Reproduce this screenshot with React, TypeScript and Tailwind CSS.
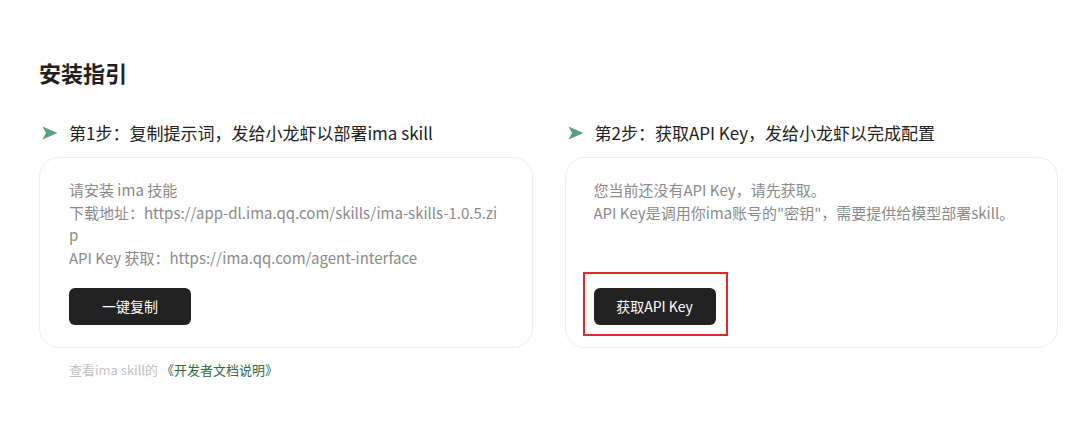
const font = { fontFamily: '"Noto Sans CJK SC", "Noto Sans", sans-serif' };

const ArrowIcon = () => (
  <svg width="16" height="14" viewBox="0 0 16 14" className="shrink-0">
    <path d="M0.5 0.5 L15.5 7 L0.5 13.5 L4 7 Z" fill="#5b9e7c" />
  </svg>
);

const StepTitle = ({ text }: { text: string }) => (
  <div className="flex items-center gap-[11px] pl-[3px] text-[17px] leading-[24px] text-[#222]">
    <ArrowIcon />
    <span>{text}</span>
  </div>
);

const DarkButton = ({ label }: { label: string }) => (
  <button className="h-[37px] w-[122px] rounded-[6px] bg-[#222222] text-[14px] text-white">{label}</button>
);

export default function App() {
  return (
    <div className="min-h-[427px] w-[1080px] bg-white pl-[39px] pr-[22px] pt-[57px]" style={font}>
      <h2 className="text-[22px] font-bold leading-[30px] text-[#1f1f1f]">安装指引</h2>

      <div className="mt-[34px] grid grid-cols-2 gap-x-[32px]">
        {/* Step 1 */}
        <div className="flex flex-col">
          <StepTitle text="第1步：复制提示词，发给小龙虾以部署ima skill" />
          <div className="mt-[12px] flex h-[191px] flex-col rounded-[20px] border border-[#efefef] bg-white px-[29px] pb-[22px] pt-[21px]">
            <div className="break-all text-[15px] leading-[22.7px] text-[#8a8a8a]">
              <p>请安装 ima 技能</p>
              <p>下载地址：https://app-dl.ima.qq.com/skills/ima-skills-1.0.5.zip</p>
              <p>API Key 获取：https://ima.qq.com/agent-interface</p>
            </div>
            <div className="mt-auto">
              <DarkButton label="一键复制" />
            </div>
          </div>
          <p className="mt-[12px] pl-[30px] text-[13px] leading-[20px] text-[#c2c2c2]">
            查看ima skill的 <span className="text-[#2f6b45]">《开发者文档说明》</span>
          </p>
        </div>

        {/* Step 2 */}
        <div className="flex flex-col">
          <StepTitle text="第2步：获取API Key，发给小龙虾以完成配置" />
          <div className="mt-[12px] flex h-[191px] flex-col rounded-[20px] border border-[#efefef] bg-white px-[28px] pb-[22px] pt-[21px]">
            <div className="text-[15px] leading-[22.7px] text-[#8a8a8a]">
              <p>您当前还没有API Key，请先获取。</p>
              <p>API Key是调用你ima账号的"密钥"，需要提供给模型部署skill。</p>
            </div>
            <div className="relative mt-auto self-start">
              <DarkButton label="获取API Key" />
              <div className="pointer-events-none absolute -bottom-[11px] -left-[11px] -right-[12px] -top-[16px] border-2 border-[#e3272d]" />
            </div>
          </div>
        </div>
      </div>
    </div>
  );
}
